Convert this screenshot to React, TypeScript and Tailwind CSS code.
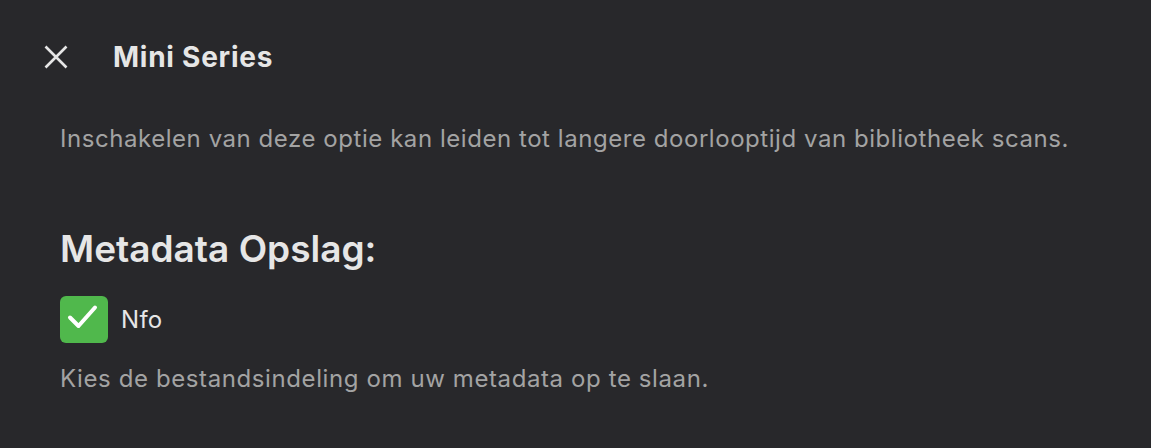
import React from "react";

export default function App() {
  return (
    <div
      className="w-[1151px] h-[448px] bg-[#28282b] text-[#e6e6e6] overflow-hidden"
      style={{ fontFamily: "Inter, 'Noto Sans', sans-serif" }}
    >
      <div className="flex items-center h-[56px] mt-[29px] pl-[44px]">
        <svg width="24" height="24" viewBox="0 0 24 24" fill="none" stroke="#e6e6e6" strokeWidth="2.6" strokeLinecap="butt">
          <path d="M1.5 1.5 L22.5 22.5 M22.5 1.5 L1.5 22.5" />
        </svg>
        <div className="ml-[45px] text-[28px] font-bold tracking-[0.75px] leading-[36px]">Mini Series</div>
      </div>
      <div className="pl-[60px]">
        <p className="mt-[38px] text-[24px] text-[#a3a3a3] leading-[32px] tracking-[0.55px]">
          Inschakelen van deze optie kan leiden tot langere doorlooptijd van bibliotheek scans.
        </p>
        <h2 className="mt-[72px] text-[37px] font-semibold leading-[44px]">Metadata Opslag:</h2>
        <div className="flex items-center mt-[25px] gap-[13px] h-[47px]">
          <div className="w-[48px] h-[47px] rounded-[6px] bg-[#50b84c]">
            <svg width="48" height="47" viewBox="0 0 48 47" fill="none" stroke="white" strokeWidth="4" strokeLinecap="round" strokeLinejoin="round">
              <path d="M10 21.5 L18.5 30 L35 11.5" />
            </svg>
          </div>
          <span className="text-[24px] tracking-[0.3px] text-[#e6e6e6]">Nfo</span>
        </div>
        <p className="mt-[20px] text-[24px] text-[#a3a3a3] leading-[32px] tracking-[0.6px]">
          Kies de bestandsindeling om uw metadata op te slaan.
        </p>
      </div>
    </div>
  );
}
